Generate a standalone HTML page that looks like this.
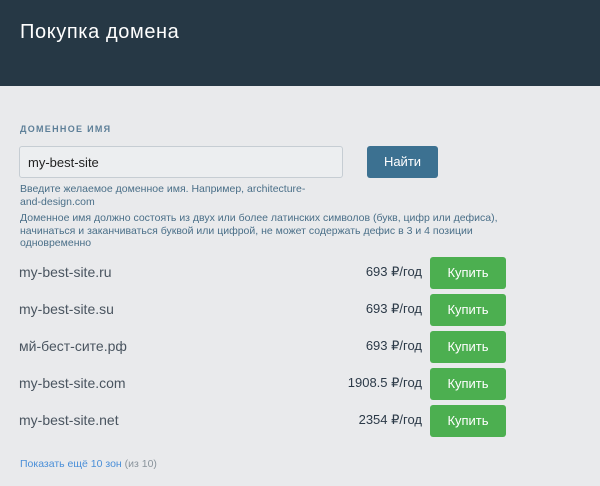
<!DOCTYPE html>
<html><head><meta charset="utf-8"><style>
body{margin:0;width:600px;height:486px;background:#e9eaec;font-family:"Liberation Sans",sans-serif;position:relative;overflow:hidden}
.hdr{position:absolute;left:0;top:0;width:600px;height:86px;background:#263845}
.hdr h1{position:absolute;left:20px;top:21px;margin:0;font-size:20px;font-weight:normal;color:#fff;letter-spacing:0.6px}
.lbl{position:absolute;left:20px;top:124px;font-size:9px;font-weight:bold;letter-spacing:1.3px;color:#5d7f98}
.inp{position:absolute;left:19px;top:146px;width:322px;height:30px;border:1px solid #c6cdd3;border-radius:3px;background:#eceef0;box-sizing:content-box}
.inp span{position:absolute;left:8px;top:8px;font-size:13px;color:#222}
.find{position:absolute;left:367px;top:146px;width:71px;height:32px;background:#3c7191;border-radius:3px;color:#fff;font-size:13px;text-align:center;line-height:32px}
.hint{position:absolute;left:20px;font-size:10.5px;color:#4a6f88;line-height:12.5px}
.row{position:absolute;left:0;width:600px;height:32px}
.row .d{position:absolute;left:19px;top:7px;font-size:14px;color:#4a5560}
.row .p{position:absolute;right:178px;top:7px;font-size:13px;color:#2c3a48}
.row .b{position:absolute;left:430px;top:0;width:76px;height:32px;background:#4caf50;border-radius:3px;color:#fff;font-size:13px;text-align:center;line-height:32px}
.more{position:absolute;left:20px;top:458px;font-size:10.5px;color:#4a8fd8}
.more span{color:#8a949c}
</style></head><body>
<div class="hdr"><h1>Покупка домена</h1></div>
<div class="lbl">ДОМЕННОЕ ИМЯ</div>
<div class="inp"><span>my-best-site</span></div>
<div class="find">Найти</div>
<div class="hint" style="top:183px">Введите желаемое доменное имя. Например, architecture-<br>and-design.com</div>
<div class="hint" style="top:212px">Доменное имя должно состоять из двух или более латинских символов (букв, цифр или дефиса),<br>начинаться и заканчиваться буквой или цифрой, не может содержать дефис в 3 и 4 позиции<br>одновременно</div>
<div class="row" style="top:257px"><span class="d">my-best-site.ru</span><span class="p">693 ₽/год</span><span class="b">Купить</span></div>
<div class="row" style="top:294px"><span class="d">my-best-site.su</span><span class="p">693 ₽/год</span><span class="b">Купить</span></div>
<div class="row" style="top:331px"><span class="d">мй-бест-сите.рф</span><span class="p">693 ₽/год</span><span class="b">Купить</span></div>
<div class="row" style="top:368px"><span class="d">my-best-site.com</span><span class="p">1908.5 ₽/год</span><span class="b">Купить</span></div>
<div class="row" style="top:405px"><span class="d">my-best-site.net</span><span class="p">2354 ₽/год</span><span class="b">Купить</span></div>
<div class="more">Показать ещё 10 зон <span>(из 10)</span></div>
</body></html>
